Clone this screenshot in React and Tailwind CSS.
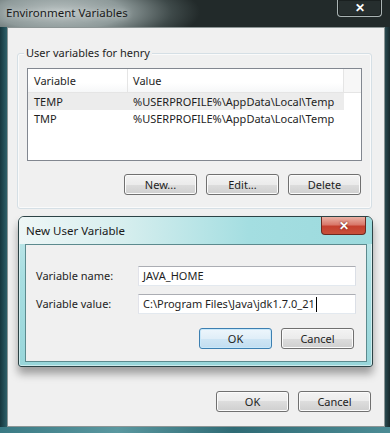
import React from 'react';

const font = "font-['Noto_Sans',sans-serif]";

const Btn = ({ children, primary }) => (
  <button
    className={
      primary
        ? 'h-[21px] w-[73px] rounded-[3px] border border-[#3c7fb1] bg-[linear-gradient(#edf6fc_0%,#e0eef8_50%,#cfe6f5_50%,#c2ddf0_100%)] shadow-[inset_0_0_0_1px_#c8e8fa] text-[11px] leading-[16px] text-[#1e1e1e]'
        : 'h-[21px] w-[73px] rounded-[3px] border border-[#707070] bg-[linear-gradient(#f3f3f3_0%,#ebebeb_50%,#dddddd_50%,#cfcfcf_100%)] shadow-[inset_0_0_0_1px_#fbfbfb] text-[11px] leading-[16px] text-[#1e1e1e]'
    }
  >
    {children}
  </button>
);

const Field = ({ label, value, caret }) => (
  <div className="flex items-center">
    <div className="w-[102px] shrink-0 text-[11px] leading-[16px] text-[#1e1e1e]">{label}</div>
    <div className="flex h-[20px] w-[218px] items-center border border-[#abadb3] border-b-[#e3e9ef] border-l-[#e2e3ea] border-r-[#dbdfe6] bg-white pl-[4px] text-[11px] leading-[16px] text-[#1e1e1e]">
      <span>{value}</span>
      {caret && <span className="ml-[1px] h-[15px] w-[1px] bg-black" />}
    </div>
  </div>
);

const App = () => {
  const rows = [
    { name: 'TEMP', value: '%USERPROFILE%\\AppData\\Local\\Temp', selected: true },
    { name: 'TMP', value: '%USERPROFILE%\\AppData\\Local\\Temp' },
  ];

  return (
    <div className={`${font} flex h-[433px] w-[390px] flex-col overflow-hidden bg-[linear-gradient(180deg,#283030_0%,#1d2626_25%,#1f3f46_60%,#2e6470_85%,#3f7c86_100%)]`}>
      {/* title bar */}
      <div className="flex h-[27px] shrink-0 items-start justify-between bg-[radial-gradient(ellipse_140px_40px_at_60px_12px,#b8c1c1_0%,#8e9a9a_45%,#3e4949_80%,#222a2a_100%)] pl-[6px] pr-[8px]">
        <div className="pt-[5px] text-[11.5px] leading-[16px] text-[#1a1a1a] [text-shadow:0_0_6px_rgba(255,255,255,0.8)]">
          Environment Variables
        </div>
        <div className="flex h-[17px] w-[45px] items-center justify-center rounded-b-[4px] border border-t-0 border-[#aab4b4] bg-[#283030]/70 shadow-[inset_0_0_0_1px_#1a2020] text-[12px] font-bold leading-none text-white">
          ✕
        </div>
      </div>

      <div className="flex">
        <div className="w-[7px] shrink-0 bg-[linear-gradient(90deg,#16363d,#2d5f68)]" />
        {/* outer client */}
        <div className="flex h-[400px] w-[378px] flex-col border border-[#8c9595] bg-[#f0f0f0]">
          {/* group box */}
          <div className="ml-[9px] mt-[25px] h-[156px] w-[355px] rounded-[3px] border border-[#d5dfe5] shadow-[inset_0_0_0_1px_#fafafa]">
            <div className="-mt-[9px] ml-[6px] w-fit bg-[#f0f0f0] px-[2px] text-[11px] leading-[16px] text-[#1e1e1e]">
              User variables for henry
            </div>
            <div className="ml-[9px] mt-[7px] flex h-[93px] w-[335px] flex-col border border-[#828790] bg-white">
              <div className="flex h-[24px] border-b border-[#e5e5e5] bg-[linear-gradient(#ffffff_0%,#ffffff_60%,#f6f7f8_100%)] text-[11px] leading-[16px] text-[#1e1e1e]">
                <div className="flex w-[100px] shrink-0 items-center border-r border-[#e5e5e5] pl-[6px]">Variable</div>
                <div className="flex w-[216px] shrink-0 items-center border-r border-[#e5e5e5] pl-[5px]">Value</div>
                <div className="flex-1 bg-[#f7f7f7]" />
              </div>
              {rows.map((r) => (
                <div
                  key={r.name}
                  className={
                    r.selected
                      ? 'flex h-[17px] w-[316px] items-center bg-[#ececec] text-[11px] leading-[16px] text-[#1e1e1e]'
                      : 'flex h-[17px] w-[316px] items-center text-[11px] leading-[16px] text-[#1e1e1e]'
                  }
                >
                  <div className="w-[100px] shrink-0 pl-[6px]">{r.name}</div>
                  <div className="whitespace-nowrap pl-[5px]">{r.value}</div>
                </div>
              ))}
            </div>
            <div className="mt-[13px] flex justify-end gap-[9px] pr-[10px]">
              <Btn>New...</Btn>
              <Btn>Edit...</Btn>
              <Btn>Delete</Btn>
            </div>
          </div>

          {/* New User Variable dialog */}
          <div className="ml-[10px] mt-[7px] flex h-[151px] w-[355px] flex-col rounded-t-[6px] rounded-b-[3px] border border-[#2c4346] bg-[linear-gradient(180deg,#c4e8ea_0%,#a8dee1_40%,#98d6da_100%)] shadow-[0_7px_9px_rgba(0,0,0,0.35),inset_0_0_0_1px_rgba(255,255,255,0.5)]">
            <div className="flex h-[27px] shrink-0 items-start justify-between rounded-t-[5px] bg-[linear-gradient(90deg,#eef6f6_0%,#d6eeee_30%,#a4dee1_65%,#9cdadd_100%)] pl-[7px] pr-[6px]">
              <div className="pt-[6px] text-[11.5px] leading-[16px] text-[#1a1a1a]">New User Variable</div>
              <div className="flex h-[18px] w-[45px] items-center justify-center rounded-b-[4px] border border-t-0 border-[#6b2a20] bg-[linear-gradient(#eab2a5_0%,#d9786a_45%,#c5402e_55%,#c8503a_100%)] text-[12px] font-bold leading-none text-white [text-shadow:0_0_2px_#5a1a12]">
                ✕
              </div>
            </div>
            <div className="ml-[6px] flex h-[118px] w-[342px] flex-col border border-[#5c8a8e] bg-[#f0f0f0] pl-[10px] pt-[21px]">
              <Field label="Variable name:" value="JAVA_HOME" />
              <div className="mt-[8px]">
                <Field label="Variable value:" value="C:\Program Files\Java\jdk1.7.0_21" caret />
              </div>
              <div className="mt-[14px] flex justify-end gap-[9px] pr-[12px]">
                <Btn primary>OK</Btn>
                <Btn>Cancel</Btn>
              </div>
            </div>
          </div>

          <div className="mt-[24px] flex justify-end gap-[9px] pr-[13px]">
            <Btn>OK</Btn>
            <Btn>Cancel</Btn>
          </div>
        </div>
        <div className="flex-1 bg-[linear-gradient(90deg,#2a4a50,#18292c)]" />
      </div>
      <div className="flex-1 bg-[linear-gradient(90deg,#3a7a84,#5a98a0_30%,#2f6b75_60%,#4c8c95_100%)]" />
    </div>
  );
};

export default App;
